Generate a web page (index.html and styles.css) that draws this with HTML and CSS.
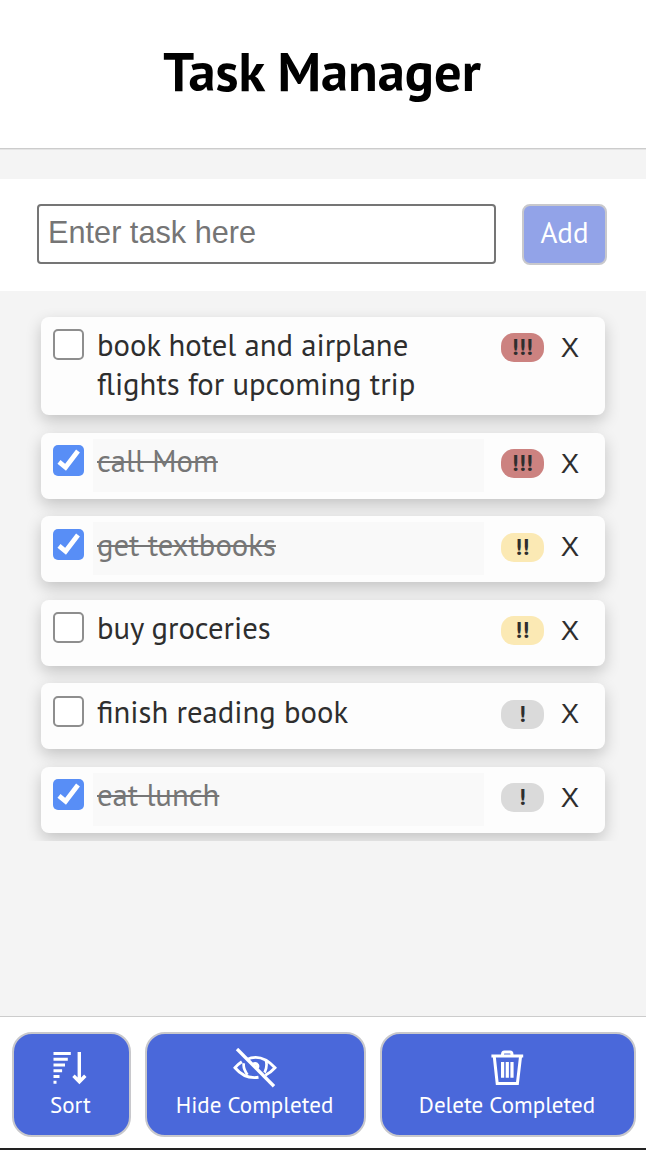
FILE: index.html
```
<!DOCTYPE html>
<html lang="en">
<head>
<meta charset="utf-8">
<title>Task Manager</title>
<link rel="stylesheet" href="styles.css">
</head>
<body>
<header class="header"><h1 class="title">Task Manager</h1></header>
<section class="entry">
  <input class="entry-input" type="text" placeholder="Enter task here" aria-label="Task">
  <button class="add">Add</button>
</section>
<main class="list">
  <div class="task tall">
    <span class="box"></span>
    <div class="name">book hotel and airplane<br>flights for upcoming trip</div>
    <span class="priority high">!!!</span><span class="remove">X</span>
  </div>
  <div class="task">
    <span class="box checked"><svg viewBox="0 0 31 31"><path d="M6 16.8 12.6 22.3 25 6"/></svg></span>
    <div class="name done">call Mom</div>
    <span class="priority high">!!!</span><span class="remove">X</span>
  </div>
  <div class="task">
    <span class="box checked"><svg viewBox="0 0 31 31"><path d="M6 16.8 12.6 22.3 25 6"/></svg></span>
    <div class="name done">get textbooks</div>
    <span class="priority medium">!!</span><span class="remove">X</span>
  </div>
  <div class="task">
    <span class="box"></span>
    <div class="name">buy groceries</div>
    <span class="priority medium">!!</span><span class="remove">X</span>
  </div>
  <div class="task">
    <span class="box"></span>
    <div class="name">finish reading book</div>
    <span class="priority low">!</span><span class="remove">X</span>
  </div>
  <div class="task">
    <span class="box checked"><svg viewBox="0 0 31 31"><path d="M6 16.8 12.6 22.3 25 6"/></svg></span>
    <div class="name done">eat lunch</div>
    <span class="priority low">!</span><span class="remove">X</span>
  </div>
</main>
<footer class="footer">
  <button class="action sort">
    <svg class="icon" viewBox="0 0 44 40"><path fill="#fff" d="M4.5 4h17.3v3H4.5zM4.5 9.8h14.3v3H4.5zM4.5 15.5h11.5v3H4.5zM4.5 21.3h8.6v3H4.5zM4.5 27h6v3h-6zM4.5 32.7h3v3h-3z"/><path d="M30.3 4v30M24.5 27.8l5.9 6 5.9-6" fill="none" stroke="#fff" stroke-width="3.4"/></svg>
    <span class="label">Sort</span>
  </button>
  <button class="action hide">
    <svg class="icon" viewBox="0 0 44 40"><g fill="none" stroke="#fff" stroke-width="2.9"><path d="M13.4 11.7Q28 4.5 42 19.7 37.2 25 32.3 27.2M25.5 29.3Q12 31.5 2 19.7 5.2 16 8.8 13.7"/><path d="M10.8 15.2Q9.8 20.5 14.5 26.8M33 12.7Q34.6 18.5 31.6 24.6" stroke-width="2.7"/><path d="M19.6 16.8Q22.8 14.6 24.6 17.2 25.4 19.6 22.6 20.6" stroke-width="3.2"/><path d="M4 1 41 38.3" stroke-width="3.4"/></g></svg>
    <span class="label">Hide Completed</span>
  </button>
  <button class="action delete">
    <svg class="icon" viewBox="0 0 44 40"><g fill="none" stroke="#fff"><path d="M6.4 8H38.2" stroke-width="3.2"/><path d="M17.5 8V6.5Q17.5 4.1 19.5 4.1H25Q27 4.1 27 6.5V8M9.2 8 12.2 35.5H32.4L35.6 8" stroke-width="3"/><path d="M17.6 14V29.7M22.3 14V29.7M27 14V29.7" stroke-width="3.2"/></g></svg>
    <span class="label">Delete Completed</span>
  </button>
</footer>
</body>
</html>
```

FILE: styles.css
```
* { box-sizing: border-box; }
body { margin: 0; height: 1150px; display: flex; flex-direction: column; overflow: hidden; background: #f4f4f4; color: #2e2e2e; font-family: "PT Sans", "Noto Sans", sans-serif; border-bottom: 2px solid #222; }
button { font-family: inherit; margin: 0; padding: 0; color: #fff; }
.header { height: 149px; flex: none; background: #fff; border-bottom: 1px solid #ccc; text-align: center; box-shadow: 0 1px 0 #e4e4e4; }
.title { margin: 0; padding-top: 34px; padding-right: 2px; color: #000; font-size: 54.5px; line-height: 75px; }
.entry { margin-top: 30px; height: 112px; flex: none; background: #fff; display: flex; align-items: flex-start; gap: 26px; padding: 25px 39px 0 37px; }
.entry-input { width: 459px; height: 60px; border: 2px solid #757575; border-radius: 4px; background: #fff; padding: 0 10px 3px 9px; font: 30.7px "Liberation Sans", sans-serif; }
.entry-input::placeholder { color: #757575; }
.add { width: 85px; height: 61px; border: 2px solid #c8c8cc; border-radius: 8px; background: #92a3e8; font-size: 29px; padding-bottom: 5px; }
.list { height: 550px; flex: none; overflow: hidden; padding: 25.8px 21px 0; margin: 0 20px; display: flex; flex-direction: column; gap: 17.5px; }
.task { flex: none; height: 66px; background: #fdfdfd; border-radius: 8px; box-shadow: 0 6px 16px rgba(0,0,0,.2); display: flex; align-items: flex-start; padding: 6px 0 0 12px; width: 564px; }
.tall { height: 98.5px; }
.box { width: 31px; height: 31px; flex: none; margin-top: 6.7px; border: 2px solid #8e8e8e; border-radius: 5px; background: #fff; }
.checked { border: 0; background: #588ef6; }
.checked svg { display: block; width: 31px; height: 31px; }
.checked path { fill: none; stroke: #fff; stroke-width: 4.8; }
.name { width: 391px; height: 53px; margin-left: 9px; padding-left: 4px; font-size: 30.7px; line-height: 39px; padding-top: 2.7px; white-space: nowrap; }
.done { background: #f9f9f9; color: #767676; text-decoration: line-through; text-decoration-thickness: 2px; }
.priority { width: 43px; height: 29px; margin: 10.5px 0 0 17px; border-radius: 13px; text-align: center; font-weight: 700; font-size: 23px; line-height: 28px; letter-spacing: .4px; }
.high { background: #cc8280; }
.medium { background: #fbe9b4; }
.low { background: #dadada; }
.remove { width: 20px; margin: 5px 0 0 16px; font: 27.5px/40px "Liberation Sans", sans-serif; text-align: center; }
.footer { margin-top: auto; height: 132px; flex: none; background: #fff; border-top: 1px solid #ccc; display: flex; gap: 14px; padding: 15px 10px 0 12px; }
.action { height: 105px; border: 2px solid #c8c8cc; border-radius: 20px; background: #4a68da; display: flex; flex-direction: column; align-items: center; padding: 14px 2px 0 0; }
.sort { width: 119px; }
.hide { width: 221px; }
.delete { width: 256px; }
.icon { width: 44px; height: 40px; display: block; }
.label { font-size: 23px; line-height: 30px; margin-top: 2px; white-space: nowrap; }
```
